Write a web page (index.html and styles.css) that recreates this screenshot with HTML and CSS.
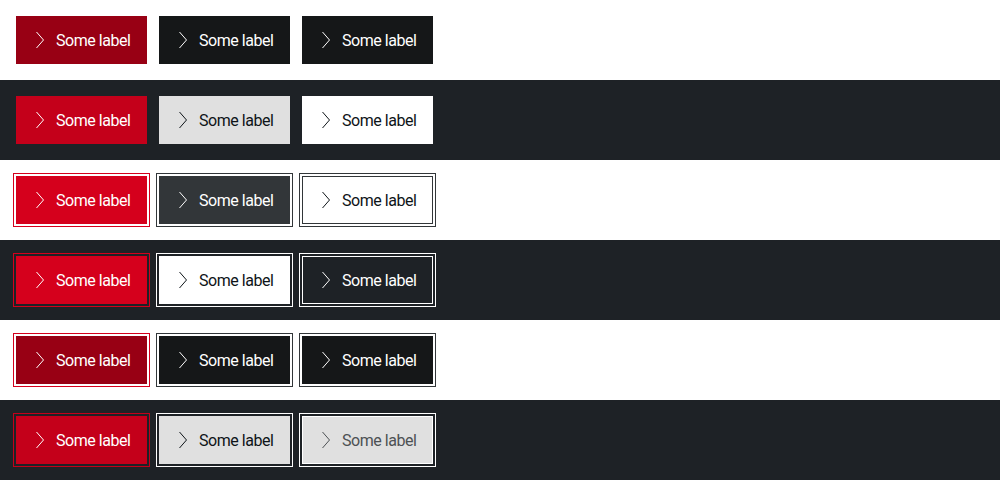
FILE: index.html
```html
<!DOCTYPE html>
<html>
<head>
<meta charset="utf-8">
<link rel="stylesheet" href="styles.css">
</head>
<body>
<div class="row light">
  <a class="btn primary-hover"><svg class="ico" viewBox="0 0 24 24"><polyline points="8.5,4 15.5,12 8.5,20"/></svg><span>Some label</span></a>
  <a class="btn dark-hover"><svg class="ico" viewBox="0 0 24 24"><polyline points="8.5,4 15.5,12 8.5,20"/></svg><span>Some label</span></a>
  <a class="btn dark-hover"><svg class="ico" viewBox="0 0 24 24"><polyline points="8.5,4 15.5,12 8.5,20"/></svg><span>Some label</span></a>
</div>
<div class="row dark">
  <a class="btn primary-dk-hover"><svg class="ico" viewBox="0 0 24 24"><polyline points="8.5,4 15.5,12 8.5,20"/></svg><span>Some label</span></a>
  <a class="btn grey"><svg class="ico" viewBox="0 0 24 24"><polyline points="8.5,4 15.5,12 8.5,20"/></svg><span>Some label</span></a>
  <a class="btn white"><svg class="ico" viewBox="0 0 24 24"><polyline points="8.5,4 15.5,12 8.5,20"/></svg><span>Some label</span></a>
</div>
<div class="row light">
  <a class="btn primary focus-red"><svg class="ico" viewBox="0 0 24 24"><polyline points="8.5,4 15.5,12 8.5,20"/></svg><span>Some label</span></a>
  <a class="btn contrast focus-grey"><svg class="ico" viewBox="0 0 24 24"><polyline points="8.5,4 15.5,12 8.5,20"/></svg><span>Some label</span></a>
  <a class="btn tertiary-light focus-grey"><svg class="ico" viewBox="0 0 24 24"><polyline points="8.5,4 15.5,12 8.5,20"/></svg><span>Some label</span></a>
</div>
<div class="row dark">
  <a class="btn primary focus-red"><svg class="ico" viewBox="0 0 24 24"><polyline points="8.5,4 15.5,12 8.5,20"/></svg><span>Some label</span></a>
  <a class="btn white focus-white"><svg class="ico" viewBox="0 0 24 24"><polyline points="8.5,4 15.5,12 8.5,20"/></svg><span>Some label</span></a>
  <a class="btn tertiary-dark focus-white"><svg class="ico" viewBox="0 0 24 24"><polyline points="8.5,4 15.5,12 8.5,20"/></svg><span>Some label</span></a>
</div>
<div class="row light">
  <a class="btn primary-hover focus-red"><svg class="ico" viewBox="0 0 24 24"><polyline points="8.5,4 15.5,12 8.5,20"/></svg><span>Some label</span></a>
  <a class="btn dark-hover focus-grey"><svg class="ico" viewBox="0 0 24 24"><polyline points="8.5,4 15.5,12 8.5,20"/></svg><span>Some label</span></a>
  <a class="btn dark-hover focus-grey"><svg class="ico" viewBox="0 0 24 24"><polyline points="8.5,4 15.5,12 8.5,20"/></svg><span>Some label</span></a>
</div>
<div class="row dark">
  <a class="btn primary-dk-hover focus-red2"><svg class="ico" viewBox="0 0 24 24"><polyline points="8.5,4 15.5,12 8.5,20"/></svg><span>Some label</span></a>
  <a class="btn grey focus-white"><svg class="ico" viewBox="0 0 24 24"><polyline points="8.5,4 15.5,12 8.5,20"/></svg><span>Some label</span></a>
  <a class="btn grey-muted focus-white"><svg class="ico" viewBox="0 0 24 24"><polyline points="8.5,4 15.5,12 8.5,20"/></svg><span>Some label</span></a>
</div>
</body>
</html>
```

FILE: styles.css
```css
* { box-sizing: border-box; }
html, body { margin: 0; padding: 0; }
body {
  font-family: Roboto, "Liberation Sans", sans-serif;
  width: 1000px;
  height: 480px;
  overflow: hidden;
}
.row {
  height: 80px;
  padding: 16px;
  display: flex;
  gap: 12px;
  align-items: flex-start;
}
.row.light { background: #ffffff; }
.row.dark { background: #1e2226; }

.btn {
  width: 131px;
  height: 48px;
  padding: 0 0 0 12px;
  display: flex;
  align-items: center;
  gap: 4px;
  font-size: 16px;
  line-height: 24px;
  letter-spacing: -0.45px;
  border: 1px solid transparent;
  color: #ffffff;
  text-decoration: none;
  cursor: pointer;
}
.btn .ico {
  width: 24px;
  height: 24px;
  margin-left: -1px;
  flex: none;
  fill: none;
  stroke: currentColor;
  stroke-width: 1;
}
.btn span { display: block; padding-top: 2px; }

.primary { background: #d5001c; border-color: #d5001c; color: #fff; }
.primary-hover { background: #980014; border-color: #980014; color: #fff; }
.primary-dk-hover { background: #c4001a; border-color: #c4001a; color: #fff; }
.contrast { background: #323639; border-color: #323639; color: #fff; }
.dark-hover { background: #151718; border-color: #151718; color: #fff; }
.grey { background: #e0e0e0; border-color: #e0e0e0; color: #0e1418; }
.white { background: #ffffff; border-color: #ffffff; color: #0e1418; }
.tertiary-light { background: #ffffff; border-color: #323639; color: #0e1418; }
.tertiary-dark { background: transparent; border-color: #ffffff; color: #ffffff; }
.grey-muted { background: #e0e0e0; border-color: #ffffff; color: #4d5154; }

.focus-red { outline: 1px solid #d5001c; outline-offset: 2px; }
.focus-red2 { outline: 1px solid #c4001a; outline-offset: 2px; }
.focus-grey { outline: 1px solid #323639; outline-offset: 2px; }
.focus-white { outline: 1px solid #ffffff; outline-offset: 2px; }
```
